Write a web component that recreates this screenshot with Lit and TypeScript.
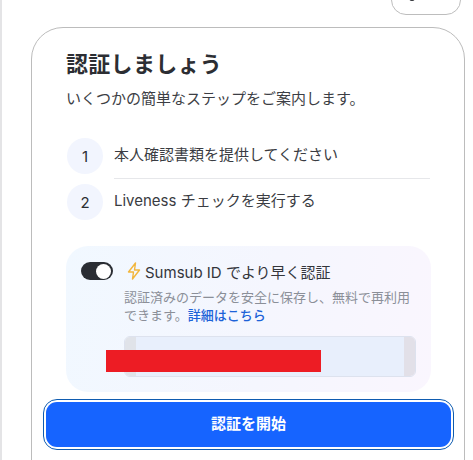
import { LitElement, html, css } from "lit";
import { customElement } from "lit/decorators.js";

@customElement("app-root")
export class AppRoot extends LitElement {
  static styles = css`
    :host {
      display: block;
      width: 473px;
      height: 460px;
      overflow: hidden;
      box-sizing: border-box;
      border-left: 2px solid #e4e4e6;
      background: #fff;
      color: #2c2e33;
      font-family: Inter, "Noto Sans CJK JP", sans-serif;
    }
    .top {
      height: 15px;
      display: flex;
      justify-content: flex-end;
      align-items: flex-end;
      overflow: hidden;
      padding-right: 12px;
    }
    .pill {
      width: 70px;
      height: 30px;
      flex: none;
      box-sizing: border-box;
      border: 1px solid #bdbdbd;
      border-radius: 16px;
      display: flex;
      align-items: flex-start;
      padding: 12px 0 0 17px;
      background: #fff;
    }
    .pill i {
      width: 6px;
      height: 3px;
      border-radius: 0 0 4px 4px;
      background: #2c2e33;
    }
    .card {
      margin: 12px 8px 0 29px;
      height: 500px;
      box-sizing: border-box;
      border: 1px solid #bcbcbc;
      border-radius: 32px;
      background: #fff;
      padding: 21px 0 0;
    }
    .head {
      padding: 0 33px 0 34px;
    }
    h1 {
      margin: 0;
      font-size: 22px;
      line-height: 30px;
      font-weight: 700;
      letter-spacing: 0.3px;
      color: #2c2e33;
    }
    .sub {
      margin: 9px 0 0;
      font-size: 15px;
      line-height: 22px;
      color: #3c3e44;
    }
    .steps {
      margin: 28px 34px 0 35px;
      display: flex;
      flex-direction: column;
    }
    .step {
      display: flex;
      align-items: center;
      gap: 11px;
      height: 36px;
    }
    .num {
      width: 36px;
      height: 36px;
      flex: none;
      border-radius: 50%;
      background: #f2f5fe;
      display: flex;
      align-items: center;
      justify-content: center;
      font-size: 15px;
      color: #2c2e33;
    }
    .label {
      flex: 1;
      font-size: 15px;
      line-height: 22px;
      font-weight: 400;
      color: #3a3c42;
      position: relative;
      top: -1px;
    }
    .divider {
      height: 1px;
      margin: 4px 0 0 47px;
      background: #e6e7ea;
    }
    .divider + .step {
      margin-top: 5px;
    }
    .panel {
      position: relative;
      margin: 26px 33px 0 34px;
      height: 146px;
      box-sizing: border-box;
      border-radius: 22px;
      background: linear-gradient(100deg, #f1f8ff 0%, #f5f6fe 55%, #faf6fe 100%);
      padding: 14px 15px 0;
      display: grid;
      grid-template-columns: 32px 1fr;
      column-gap: 11px;
      align-content: start;
    }
    .toggle {
      width: 32px;
      height: 18px;
      margin-top: 2px;
      border-radius: 9px;
      background: #2a2d33;
      display: flex;
      align-items: center;
      justify-content: flex-end;
      padding-right: 2px;
      box-sizing: border-box;
    }
    .toggle i {
      width: 15px;
      height: 15px;
      border-radius: 50%;
      background: #fff;
    }
    .title {
      display: flex;
      align-items: center;
      gap: 4px;
      margin-left: 3px;
      height: 22px;
      font-size: 15px;
      color: #33353b;
    }
    .desc {
      grid-column: 2;
      margin: 6px 0 0 0;
      width: 292px;
      font-size: 13px;
      line-height: 18px;
      color: #8b8f98;
    }
    .desc a {
      color: #1c62d8;
      font-weight: 500;
      text-decoration: none;
    }
    .qr {
      grid-column: 2;
      margin-top: 12px;
      height: 41px;
      width: 292px;
      box-sizing: border-box;
      border: 1px solid #dde2ee;
      border-radius: 6px;
      overflow: hidden;
      display: grid;
      grid-template-columns: 11px 1fr 11px;
    }
    .qr .side {
      background: #e0e3e9;
    }
    .qr .side.right {
      background: #e2e0e8;
    }
    .qr .mid {
      background: #e8effc;
    }
    .mask {
      position: absolute;
      left: 40px;
      top: 104px;
      width: 215px;
      height: 22px;
      background: #ed1c24;
    }
    .foot {
      padding: 7px 13px 0 14px;
    }
    button {
      display: block;
      width: 100%;
      height: 45px;
      margin: 3px 0;
      padding: 0 0 5px;
      border: 0;
      border-radius: 11px;
      background: #1664ff;
      color: #fff;
      font: 700 15px Inter, "Noto Sans CJK JP", sans-serif;
      outline: 1px solid #0f5cb0;
      outline-offset: 2px;
    }
  `;

  render() {
    return html`
      <div class="top"><div class="pill"><i></i></div></div>
      <div class="card">
        <div class="head">
          <h1>認証しましょう</h1>
          <p class="sub">いくつかの簡単なステップをご案内します。</p>
        </div>
        <div class="steps">
          <div class="step"><span class="num">1</span><span class="label">本人確認書類を提供してください</span></div>
          <div class="divider"></div>
          <div class="step"><span class="num">2</span><span class="label">Liveness チェックを実行する</span></div>
        </div>
        <div class="panel">
          <div class="toggle"><i></i></div>
          <div class="title">
            <svg width="14" height="18" viewBox="0 0 14 18" fill="none">
              <path d="M8.5 1 L1.5 10 H6.5 L5.5 17 L12.5 8 H7.5 Z" stroke="#f2b63c" stroke-width="1.4" stroke-linejoin="round"></path>
            </svg>
            <span>Sumsub ID でより早く認証</span>
          </div>
          <p class="desc">認証済みのデータを安全に保存し、無料で再利用できます。<a href="#">詳細はこちら</a></p>
          <div class="qr"><div class="side"></div><div class="mid"></div><div class="side right"></div></div>
          <div class="mask"></div>
        </div>
        <div class="foot"><button>認証を開始</button></div>
      </div>
    `;
  }
}
